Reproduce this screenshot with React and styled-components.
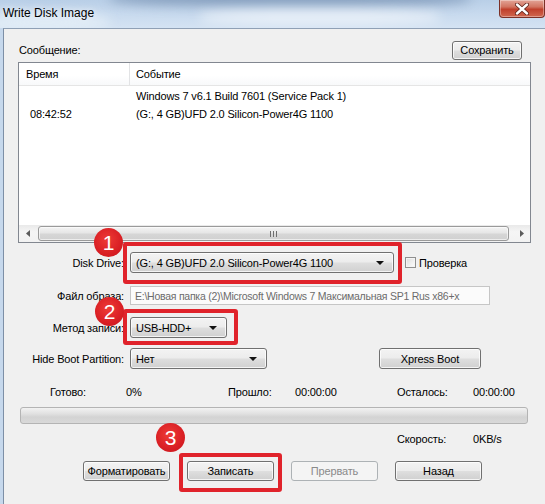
import React from 'react';
import styled, { createGlobalStyle, css } from 'styled-components';

const UI_FONT = '"Liberation Sans", Arial, sans-serif';

const GlobalStyle = createGlobalStyle`
  html, body {
    margin: 0;
    padding: 0;
    background: #f0f0f0;
  }

  body {
    font-family: ${UI_FONT};
    font-size: 11px;
    letter-spacing: -0.15px;
    color: #000;
    overflow: hidden;
  }

  * {
    box-sizing: border-box;
  }
`;

const buttonFace = css`
  border: 1px solid #707070;
  border-radius: 3px;
  background: linear-gradient(#f3f3f3 0%, #ececec 48%, #dedede 52%, #d0d0d0 100%);
  box-shadow: inset 0 0 0 1px rgba(255, 255, 255, 0.75);
`;

const Window = styled.div`
  width: 545px;
  height: 504px;
  display: flex;
  flex-direction: column;
  background: #c6d8ec;
  overflow: hidden;
`;

const TitleBar = styled.div`
  position: relative;
  flex: none;
  height: 28px;
  display: flex;
  align-items: flex-start;
  background: linear-gradient(180deg, #b9cfe7 0%, #c8daee 50%, #d4e3f3 100%);
  overflow: hidden;
`;

// blurred glass streaks behind the caption
const Haze = styled.div`
  position: absolute;
  left: ${(p) => p.$x}px;
  top: ${(p) => p.$y}px;
  width: ${(p) => p.$w}px;
  height: ${(p) => p.$h}px;
  background: ${(p) => p.$c};
  filter: blur(${(p) => p.$blur}px);
  border-radius: 40%;
`;

const Title = styled.div`
  position: relative;
  margin: 6px 0 0 3px;
  font-size: 12px;
  letter-spacing: 0;
  color: #000;
  text-shadow: 0 0 6px rgba(255, 255, 255, 0.9);
`;

const CloseButton = styled.div`
  position: relative;
  margin-left: auto;
  width: 46px;
  height: 18px;
  display: flex;
  align-items: center;
  justify-content: center;
  border: 1px solid #7b3027;
  border-top: none;
  border-radius: 0 0 4px 4px;
  background: linear-gradient(#e3a497 0%, #d27562 40%, #c0402c 55%, #d0674f 100%);
  box-shadow: inset 0 0 0 1px rgba(255, 255, 255, 0.35);
`;

const Client = styled.div`
  flex: 1;
  margin-left: 3px;
  border-left: 1px solid #7d8fa6;
  border-top: 1px solid #8fa0b5;
  background: #f0f0f0;
  padding: 11px 14px 0 14px;
`;

const MessageHeader = styled.div`
  display: flex;
  align-items: center;
  justify-content: space-between;
  height: 20px;
  padding: 0 9px 0 1px;
`;

const Button = styled.button`
  ${buttonFace};
  font: inherit;
  letter-spacing: inherit;
  color: #000;
  width: ${(p) => p.$w}px;
  height: ${(p) => p.$h || 20}px;
  margin-left: ${(p) => p.$ml || 0}px;
  padding: 0;
  white-space: nowrap;
  position: relative;

  &:disabled {
    border-color: #adb2b5;
    background: #f4f4f4;
    color: #8a8a8a;
    box-shadow: none;
  }
`;

const LogList = styled.div`
  height: 181px;
  margin-top: 2px;
  display: flex;
  flex-direction: column;
  border: 1px solid #828790;
  background: #fff;
`;

const LogHeader = styled.div`
  flex: none;
  display: flex;
  height: 23px;
  border-bottom: 1px solid #e5e5e5;
  background: linear-gradient(#fff 0%, #fff 55%, #f8f9fa 100%);
`;

const HeaderCell = styled.div`
  display: flex;
  align-items: center;
  width: ${(p) => (p.$w ? `${p.$w}px` : 'auto')};
  flex: ${(p) => (p.$w ? 'none' : 1)};
  padding-left: ${(p) => p.$pad}px;
  border-right: ${(p) => (p.$w ? '1px solid #e2e3e5' : 'none')};
`;

const LogBody = styled.div`
  flex: 1;
  padding-top: 1px;
`;

const LogRow = styled.div`
  display: flex;
  align-items: center;
  height: 18px;
`;

const LogCell = styled.div`
  width: ${(p) => (p.$w ? `${p.$w}px` : 'auto')};
  flex: ${(p) => (p.$w ? 'none' : 1)};
  padding-left: ${(p) => p.$pad}px;
  white-space: nowrap;
`;

const HScroll = styled.div`
  flex: none;
  display: flex;
  align-items: center;
  height: 17px;
  background: linear-gradient(#e9e9e9, #f5f5f5 40%, #f2f2f2);
`;

const ScrollArrow = styled.div`
  flex: none;
  width: 17px;
  height: 17px;
  display: flex;
  align-items: center;
  justify-content: center;
`;

const Thumb = styled.div`
  flex: 1;
  height: 15px;
  margin: 0 4px 0 2px;
  display: flex;
  align-items: center;
  justify-content: center;
  border: 1px solid #9a9a9a;
  border-radius: 3px;
  background: linear-gradient(#f4f4f4 0%, #e6e6e6 45%, #d6d6d6 55%, #d0d0d0 100%);
  box-shadow: inset 0 0 0 1px rgba(255, 255, 255, 0.6);
`;

const Grip = styled.div`
  display: flex;
  gap: 2px;

  & > span {
    width: 1px;
    height: 6px;
    background: #6e6e6e;
  }
`;

const FormRow = styled.div`
  display: grid;
  grid-template-columns: 106px 1fr;
  column-gap: 6px;
  align-items: center;
  margin-top: ${(p) => p.$mt}px;
`;

const FieldLabel = styled.div`
  text-align: right;
  white-space: nowrap;
`;

const Controls = styled.div`
  display: flex;
  align-items: center;
`;

const Marked = styled.div`
  position: relative;
  display: inline-flex;
`;

// red callout frame drawn around a control: [top, right, bottom, left]
const Highlight = styled.div`
  position: absolute;
  top: ${(p) => p.$box[0]}px;
  right: ${(p) => p.$box[1]}px;
  bottom: ${(p) => p.$box[2]}px;
  left: ${(p) => p.$box[3]}px;
  border: 4px solid #e0232b;
  border-radius: 3px;
  pointer-events: none;
  z-index: 1;
`;

const Badge = styled.div`
  position: absolute;
  left: ${(p) => p.$x}px;
  top: ${(p) => p.$y}px;
  width: 29px;
  height: 29px;
  display: flex;
  align-items: center;
  justify-content: center;
  border-radius: 50%;
  background: radial-gradient(circle at 45% 40%, #ee3b36 0%, #d91f24 60%, #c4141b 100%);
  color: #fff;
  font-family: ${UI_FONT};
  font-size: 21px;
  font-weight: 400;
  letter-spacing: 0;
  z-index: 2;
`;

const Combo = styled.div`
  ${buttonFace};
  display: flex;
  align-items: center;
  width: ${(p) => p.$w}px;
  height: 21px;
  padding: 0 9px 0 5px;
  white-space: nowrap;
`;

const ComboText = styled.span`
  flex: 1;
  overflow: hidden;
`;

const ComboArrow = styled.span`
  width: 0;
  height: 0;
  border-left: 4px solid transparent;
  border-right: 4px solid transparent;
  border-top: 4px solid #111;
`;

const PathField = styled.div`
  width: 360px;
  height: 19px;
  display: flex;
  align-items: center;
  padding-left: 4px;
  border: 1px solid #c6c6c6;
  background: #fbfbfb;
  color: #6b6b6b;
  font-size: 10.5px;
  letter-spacing: -0.25px;
  white-space: nowrap;
  overflow: hidden;
`;

const CheckBox = styled.span`
  width: 11px;
  height: 11px;
  margin: 0 3px 0 11px;
  border: 1px solid #8f8f8f;
  background: linear-gradient(135deg, #dcdcdc, #fefefe);
  box-shadow: inset 0 0 0 1px #f4f4f4;
`;

const Stats = styled.div`
  display: grid;
  grid-template-columns: 76px 102px 67px 102px 76px auto;
  align-items: center;
  height: 14px;
  padding-left: 32px;
  margin-top: ${(p) => p.$mt}px;
  white-space: nowrap;
`;

const Progress = styled.div`
  height: 17px;
  margin: 8px 3px 0 2px;
  border: 1px solid #b4b4b4;
  border-radius: 3px;
  background: linear-gradient(#f2f2f2 0%, #e0e0e0 40%, #d3d3d3 60%, #d9d9d9 100%);
`;

const Actions = styled.div`
  display: flex;
  gap: 17px;
  padding-left: 65px;
  margin-top: 15px;
`;

const CloseGlyph = () => (
  <svg width="14" height="12" viewBox="0 0 14 12">
    <path d="M2 1.5 L12 10.5 M12 1.5 L2 10.5" stroke="#5a2018" strokeWidth="4" strokeLinecap="round" />
    <path d="M2 1.5 L12 10.5 M12 1.5 L2 10.5" stroke="#fff" strokeWidth="2.4" strokeLinecap="round" />
  </svg>
);

const ScrollTriangle = ({ dir }) => (
  <svg width="4" height="7" viewBox="0 0 4 7">
    <path d={dir === 'left' ? 'M4 0 L0 3.5 L4 7 Z' : 'M0 0 L4 3.5 L0 7 Z'} fill="#5c5c5c" />
  </svg>
);

const logRows = [
  { time: '', text: 'Windows 7 v6.1 Build 7601 (Service Pack 1)' },
  { time: '08:42:52', text: '(G:, 4 GB)UFD 2.0 Silicon-Power4G 1100' },
];

const App = () => (
  <Window>
    <GlobalStyle />
    <TitleBar>
      <Haze $x={110} $y={-10} $w={360} $h={16} $c="rgba(70, 100, 140, 0.45)" $blur={6} />
      <Haze $x={200} $y={10} $w={240} $h={14} $c="rgba(255, 255, 255, 0.6)" $blur={6} />
      <Haze $x={-20} $y={14} $w={130} $h={16} $c="rgba(235, 243, 250, 0.7)" $blur={6} />
      <Title>Write Disk Image</Title>
      <CloseButton>
        <CloseGlyph />
      </CloseButton>
    </TitleBar>

    <Client>
      <MessageHeader>
        <span>Сообщение:</span>
        <Button $w={70} $h={19}>Сохранить</Button>
      </MessageHeader>

      <LogList>
        <LogHeader>
          <HeaderCell $w={111} $pad={7}>Время</HeaderCell>
          <HeaderCell $pad={6}>Событие</HeaderCell>
        </LogHeader>
        <LogBody>
          {logRows.map((row) => (
            <LogRow key={row.text}>
              <LogCell $w={111} $pad={11}>{row.time}</LogCell>
              <LogCell $pad={6}>{row.text}</LogCell>
            </LogRow>
          ))}
        </LogBody>
        <HScroll>
          <ScrollArrow><ScrollTriangle dir="left" /></ScrollArrow>
          <Thumb>
            <Grip><span /><span /><span /></Grip>
          </Thumb>
          <ScrollArrow><ScrollTriangle dir="right" /></ScrollArrow>
        </HScroll>
      </LogList>

      <FormRow $mt={9}>
        <FieldLabel>Disk Drive:</FieldLabel>
        <Controls>
          <Marked>
            <Highlight $box={[-10, -8, -11, -7]} />
            <Badge $x={-36} $y={-24}>1</Badge>
            <Combo $w={264}>
              <ComboText>(G:, 4 GB)UFD 2.0 Silicon-Power4G 1100</ComboText>
              <ComboArrow />
            </Combo>
          </Marked>
          <CheckBox />
          <span>Проверка</span>
        </Controls>
      </FormRow>

      <FormRow $mt={13}>
        <FieldLabel>Файл образа:</FieldLabel>
        <Controls>
          <PathField>E:\Новая папка (2)\Microsoft Windows 7 Максимальная SP1 Rus x86+x</PathField>
        </Controls>
      </FormRow>

      <FormRow $mt={12}>
        <FieldLabel>Метод записи:</FieldLabel>
        <Controls>
          <Marked>
            <Highlight $box={[-8, -11, -7, -7]} />
            <Badge $x={-35} $y={-20}>2</Badge>
            <Combo $w={97}>
              <ComboText>USB-HDD+</ComboText>
              <ComboArrow />
            </Combo>
          </Marked>
        </Controls>
      </FormRow>

      <FormRow $mt={10}>
        <FieldLabel>Hide Boot Partition:</FieldLabel>
        <Controls>
          <Combo $w={137}>
            <ComboText>Нет</ComboText>
            <ComboArrow />
          </Combo>
          <Button $w={102} $h={21} $ml={112}>Xpress Boot</Button>
        </Controls>
      </FormRow>

      <Stats $mt={16}>
        <span>Готово:</span>
        <span>0%</span>
        <span>Прошло:</span>
        <span>00:00:00</span>
        <span>Осталось:</span>
        <span>00:00:00</span>
      </Stats>

      <Progress />

      <Stats $mt={8}>
        <span />
        <span />
        <span />
        <span />
        <span>Скорость:</span>
        <span>0KB/s</span>
      </Stats>

      <Actions>
        <Button $w={87}>Форматировать</Button>
        <Marked>
          <Highlight $box={[-8, -8, -11, -8]} />
          <Badge $x={-31} $y={-38}>3</Badge>
          <Button $w={87}>Записать</Button>
        </Marked>
        <Button $w={87} disabled>Прервать</Button>
        <Button $w={87}>Назад</Button>
      </Actions>
    </Client>
  </Window>
);

export default App;
